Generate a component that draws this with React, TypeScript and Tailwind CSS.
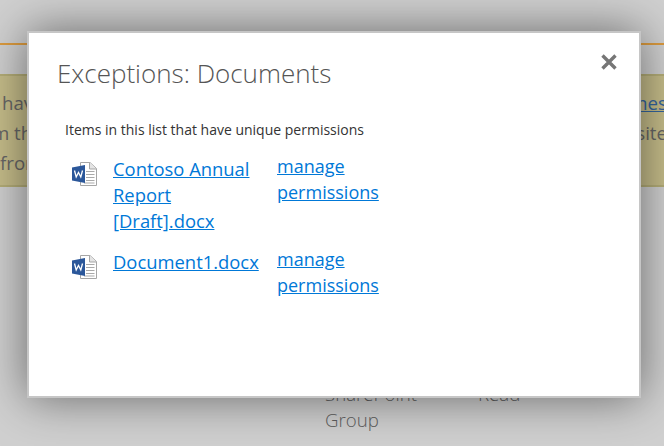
const FONT = "font-['Open_Sans','Noto_Sans',sans-serif]";

const ITEMS = [
  { name: "Contoso Annual Report [Draft].docx", rowClass: "h-[93px]" },
  { name: "Document1.docx", rowClass: "h-[60px]" },
];

function WordIcon() {
  return (
    <svg width="25" height="24" viewBox="0 0 25 24" className="block">
      <path d="M8.5 .5H18L24.5 6.5V23.5H8.5Z" fill="#fff" stroke="#a6a6a6" />
      <path d="M17.5 .5V7H24.5" fill="#e4e4e4" stroke="#a6a6a6" />
      <path d="M14 9.5H22.5M14 12.5H22.5M14 15.5H22.5M14 18.5H22.5M12 21H22.5" stroke="#a9a9a9" />
      <path d="M0 5.5L13 3V21L0 18.5Z" fill="#2b579a" />
      <path d="M2.5 8.5L4.2 15L6.5 10.5L8.8 15L10.5 8.5" fill="none" stroke="#fff" strokeWidth="1.3" />
    </svg>
  );
}

function ExceptionRow({ name, rowClass }: { name: string; rowClass: string }) {
  return (
    <div className={`flex ${rowClass}`}>
      <div className="w-[49px] shrink-0 pt-[9px] pl-[8px]">
        <WordIcon />
      </div>
      <a href="#" className="w-[164px] shrink-0 pt-[3px] pr-[10px] text-[18.4px] text-[#0078d7] underline">
        {name}
      </a>
      <a href="#" className="w-[120px] text-[18px] text-[#0078d7] underline">
        manage permissions
      </a>
    </div>
  );
}

export default function App() {
  return (
    <div className={`relative h-[446px] w-[664px] overflow-hidden bg-[#d0d0d0] ${FONT}`}>
      {/* dimmed page behind the dialog */}
      <div className="pt-[43px] text-[18.67px] leading-[30px] text-[#666]">
        <div className="h-[2px] bg-[#dc9b3f]" />
        <div className="mt-[29px] flex h-[113px] justify-between border-y-2 border-[#b5ae78] bg-[#c6bd8a] py-[12px]">
          <div className="-ml-[8px]">
            <div>I have</div>
            <div>m the</div>
            <div className="ml-[8px]">from</div>
          </div>
          <div className="-mr-[3px] text-right">
            <div className="text-[#34659f] underline">themes</div>
            <div>site</div>
          </div>
        </div>
        <div className="mt-[194px] ml-[325px] flex font-light text-[#5f5f5f]">
          <div className="w-[153px] pr-[40px] leading-[26px]">SharePoint Group</div>
          <div className="leading-[26px]">Read</div>
        </div>
      </div>

      {/* dialog */}
      <div className="absolute top-[31px] left-[27px] h-[367px] w-[614px] border-2 border-[#c6c6c6] bg-white pt-[22px] pl-[29px] shadow-[0_0_44px_rgba(0,0,0,0.5)]">
        <h1 className="-ml-[1px] text-[26px] leading-[36px] font-light text-[#555]">Exceptions: Documents</h1>
        <button className="absolute top-[20px] right-[21px] text-[#767676]">
          <svg width="18" height="18" viewBox="0 0 18 18" className="block">
            <path d="M2.5 2.5L15.5 15.5M15.5 2.5L2.5 15.5" stroke="currentColor" strokeWidth="3.4" />
          </svg>
        </button>
        <p className="mt-[29px] ml-[7px] text-[14px] leading-[20px] text-[#333]">
          Items in this list that have unique permissions
        </p>
        <div className="mt-[13px] ml-[6px] leading-[26px]">
          {ITEMS.map((item) => (
            <ExceptionRow key={item.name} name={item.name} rowClass={item.rowClass} />
          ))}
        </div>
      </div>
    </div>
  );
}
